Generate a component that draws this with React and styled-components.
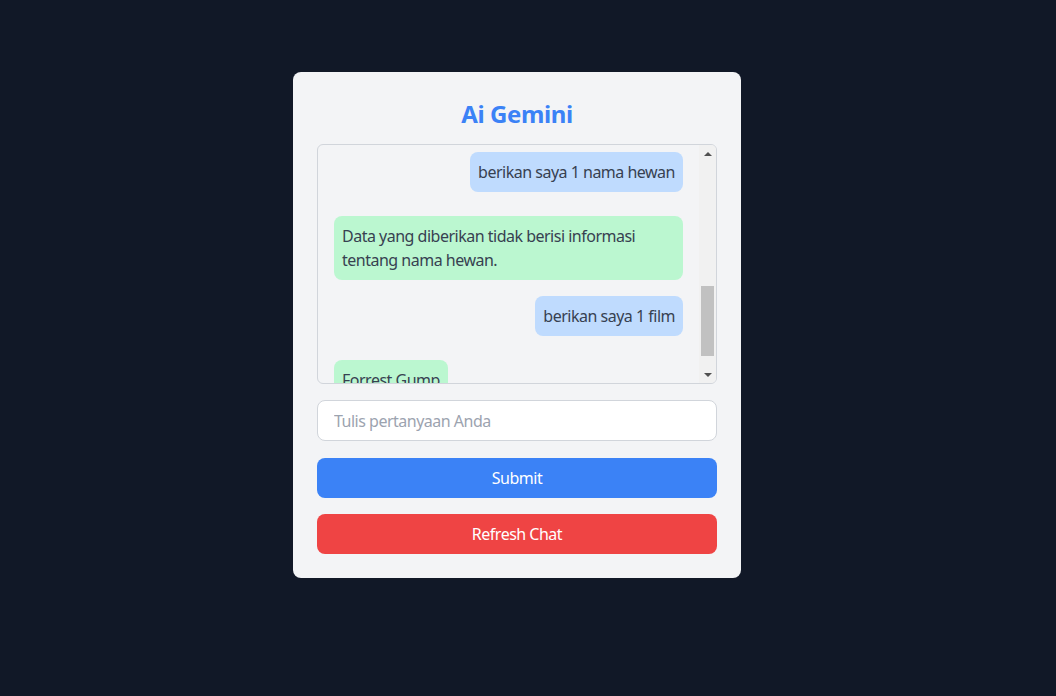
import React, { useEffect, useRef, useState } from "react";
import styled, { createGlobalStyle } from "styled-components";

const GlobalStyle = createGlobalStyle`
  * { box-sizing: border-box; }
  body {
    margin: 0;
    background: #111827;
    font-family: "Noto Sans", "Open Sans", sans-serif;
    color: #374151;
  }
`;

const Page = styled.div`
  min-height: 696px;
  display: flex;
  justify-content: center;
  align-items: flex-start;
  padding: 72px 22px 0 0;
`;

const Card = styled.div`
  width: 448px;
  background: #f3f4f6;
  border-radius: 8px;
  padding: 24px;
`;

const Title = styled.h1`
  margin: 0 0 14px;
  padding-top: 2px;
  text-align: center;
  font-size: 24px;
  line-height: 32px;
  font-weight: 700;
  color: #3b82f6;
  letter-spacing: -0.4px;
`;

const ChatFrame = styled.div`
  display: flex;
  height: 240px;
  border: 1px solid #d1d5db;
  border-radius: 6px;
  overflow: hidden;
  margin-bottom: 16px;
`;

const Messages = styled.div`
  flex: 1;
  overflow-y: scroll;
  padding: 16px 16px 0;
  scrollbar-width: none;
  &::-webkit-scrollbar {
    display: none;
  }
`;

const ScrollBar = styled.div`
  width: 17px;
  display: flex;
  flex-direction: column;
  background: #f1f1f1;
`;

const ArrowBtn = styled.div`
  height: 17px;
  display: flex;
  align-items: center;
  justify-content: center;
  &::after {
    content: "";
    border-left: 4px solid transparent;
    border-right: 4px solid transparent;
    ${(p) =>
      p.$down
        ? "border-top: 4px solid #505050;"
        : "border-bottom: 4px solid #505050;"}
  }
`;

const Track = styled.div`
  flex: 1;
  padding: 0 2px;
`;

const Thumb = styled.div`
  background: #c1c1c1;
`;

const Row = styled.div`
  display: flex;
  justify-content: ${(p) => (p.$user ? "flex-end" : "flex-start")};
  margin-bottom: ${(p) => (p.$user ? "24px" : "16px")};
`;

const Bubble = styled.div`
  padding: 8px;
  border-radius: 8px;
  font-size: 16px;
  line-height: 24px;
  letter-spacing: -0.5px;
  color: #374151;
  background: ${(p) => (p.$user ? "#bfdbfe" : "#bbf7d0")};
  max-width: 100%;
`;

const Input = styled.input`
  display: block;
  width: 100%;
  height: 41px;
  padding: 0 16px;
  border: 1px solid #d1d5db;
  border-radius: 8px;
  background: #fff;
  font-family: inherit;
  font-size: 16px;
  letter-spacing: -0.5px;
  color: #374151;
  margin-bottom: 17px;
  outline: none;

  &::placeholder {
    color: #9ca3af;
  }
`;

const Button = styled.button`
  display: block;
  width: 100%;
  height: 40px;
  border: none;
  border-radius: 8px;
  background: ${(p) => (p.$danger ? "#ef4444" : "#3b82f6")};
  color: #fff;
  font-family: inherit;
  font-size: 16px;
  letter-spacing: -0.5px;
  cursor: pointer;
  & + & {
    margin-top: 16px;
  }
`;

const initialMessages = [
  { role: "user", text: "halo" },
  { role: "ai", text: "Halo! Ada yang bisa saya bantu hari ini? Silakan ajukan pertanyaan." },
  { role: "user", text: "siapa kamu" },
  { role: "ai", text: "Saya adalah model bahasa besar yang dilatih oleh Google." },
  { role: "user", text: "berikan saya 1 nama buah" },
  { role: "ai", text: "Apel" },
  { role: "user", text: "berikan saya 1 nama hewan", anchor: true },
  { role: "ai", text: "Data yang diberikan tidak berisi informasi tentang nama hewan." },
  { role: "user", text: "berikan saya 1 film" },
  { role: "ai", text: "Forrest Gump" },
];

const TRACK = 204;

const App = () => {
  const [messages, setMessages] = useState(initialMessages);
  const [question, setQuestion] = useState("");
  const [thumb, setThumb] = useState({ top: 0, size: TRACK });
  const boxRef = useRef(null);
  const anchorRef = useRef(null);

  const updateThumb = () => {
    const el = boxRef.current;
    if (!el) return;
    const size = Math.max(20, (el.clientHeight / el.scrollHeight) * TRACK);
    const range = el.scrollHeight - el.clientHeight;
    const top = range > 0 ? (el.scrollTop / range) * (TRACK - size) : 0;
    setThumb({ top, size });
  };

  useEffect(() => {
    const el = boxRef.current;
    if (el && anchorRef.current) {
      el.scrollTop = anchorRef.current.offsetTop - el.offsetTop - 7;
    }
    updateThumb();
  }, [messages]);

  const onSubmit = () => {
    if (!question.trim()) return;
    setMessages([...messages, { role: "user", text: question }]);
    setQuestion("");
  };

  return (
    <>
      <GlobalStyle />
      <Page>
        <Card>
          <Title>Ai Gemini</Title>
          <ChatFrame>
            <Messages ref={boxRef} onScroll={updateThumb}>
              {messages.map((msg, i) => (
                <Row
                  key={i}
                  $user={msg.role === "user"}
                  ref={msg.anchor ? anchorRef : null}
                >
                  <Bubble $user={msg.role === "user"}>{msg.text}</Bubble>
                </Row>
              ))}
            </Messages>
            <ScrollBar>
              <ArrowBtn />
              <Track>
                <Thumb style={{ marginTop: thumb.top, height: thumb.size }} />
              </Track>
              <ArrowBtn $down />
            </ScrollBar>
          </ChatFrame>
          <Input
            placeholder="Tulis pertanyaan Anda"
            value={question}
            onChange={(e) => setQuestion(e.target.value)}
          />
          <Button onClick={onSubmit}>Submit</Button>
          <Button $danger onClick={() => setMessages([])}>
            Refresh Chat
          </Button>
        </Card>
      </Page>
    </>
  );
};

export default App;
